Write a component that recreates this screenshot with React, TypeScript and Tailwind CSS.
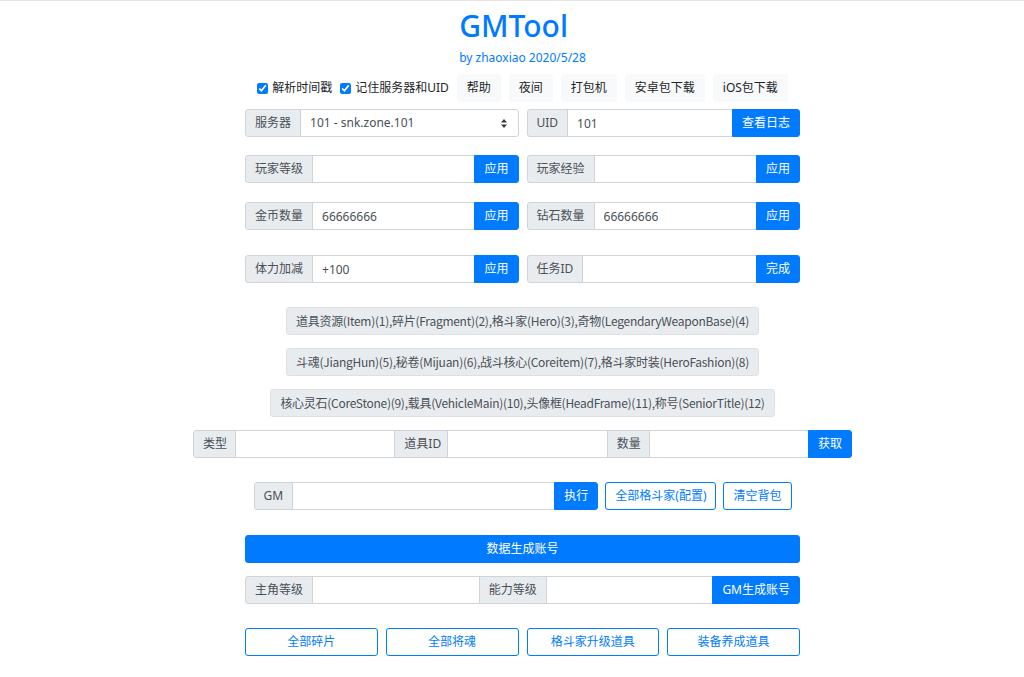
import React from 'react';

const addon = "flex items-center px-[9px] bg-[#e9ecef] border border-[#ced4da] text-[#495057] whitespace-nowrap";
const field = "min-w-0 h-[28px] px-[9px] bg-white border border-[#ced4da] text-[#495057] outline-none";
const primary = "flex items-center justify-center px-[9px] bg-[#007bff] border border-[#007bff] text-white whitespace-nowrap";
const outline = "flex items-center justify-center px-[9px] h-[28px] bg-white border border-[#007bff] text-[#007bff] rounded-[3px] whitespace-nowrap";

const InputRow = ({ label, value, action }: { label: string; value?: string; action: string }) => (
  <div className="flex h-[28px]">
    <span className={`${addon} rounded-l-[3px]`}>{label}</span>
    <input className={`${field} flex-1 -ml-px`} defaultValue={value} />
    <button className={`${primary} -ml-px rounded-r-[3px]`}>{action}</button>
  </div>
);

const itemTypes = [
  '道具资源(Item)(1),碎片(Fragment)(2),格斗家(Hero)(3),奇物(LegendaryWeaponBase)(4)',
  '斗魂(JiangHun)(5),秘卷(Mijuan)(6),战斗核心(Coreitem)(7),格斗家时装(HeroFashion)(8)',
  '核心灵石(CoreStone)(9),载具(VehicleMain)(10),头像框(HeadFrame)(11),称号(SeniorTitle)(12)',
];

const topButtons = ['帮助', '夜间', '打包机', '安卓包下载', 'iOS包下载'];
const bottomButtons = ['全部碎片', '全部将魂', '格斗家升级道具', '装备养成道具'];

export default function App() {
  return (
    <div className="min-h-[677px] bg-white border-t border-[#e5e5e5] pl-[21px] text-[12px] leading-[18px] text-[#212529] font-['Noto_Sans','Noto_Sans_CJK_SC',sans-serif]">
      <div className="w-[555px] mx-auto pb-[20px]">
        {/* Header */}
        <div className="flex justify-center">
          <div className="text-left">
            <h1 className="mt-[7px] text-[30px] leading-[36px] font-medium text-[#007bff]">GMTool</h1>
            <p className="mt-[5px] text-[#007bff]">by zhaoxiao 2020/5/28</p>
          </div>
        </div>

        {/* Options */}
        <div className="mt-[7px] flex justify-center items-center gap-[8px] h-[28px]">
          <label className="flex items-center gap-[4px]">
            <input type="checkbox" defaultChecked className="w-[11px] h-[11px] accent-[#007bff]" />
            <span>解析时间戳</span>
          </label>
          <label className="flex items-center gap-[4px]">
            <input type="checkbox" defaultChecked className="w-[11px] h-[11px] accent-[#007bff]" />
            <span>记住服务器和UID</span>
          </label>
          {topButtons.map((b) => (
            <button key={b} className="h-[28px] px-[9px] bg-[#f8f9fa] border border-[#f8f9fa] rounded-[3px] text-[#212529] whitespace-nowrap">
              {b}
            </button>
          ))}
        </div>

        {/* Server / UID */}
        <div className="mt-[7px] grid grid-cols-2 gap-[8px]">
          <div className="flex h-[28px]">
            <span className={`${addon} rounded-l-[3px]`}>服务器</span>
            <div className="flex-1 -ml-px flex items-center justify-between px-[9px] bg-white border border-[#ced4da] rounded-r-[3px] text-[#495057]">
              <span>101 - snk.zone.101</span>
              <svg width="8" height="11" viewBox="0 0 8 11" className="mr-[1px]">
                <path d="M4 1 L7 4.5 H1 Z" fill="#343a40" />
                <path d="M4 10 L7 6.5 H1 Z" fill="#343a40" />
              </svg>
            </div>
          </div>
          <div className="flex h-[28px]">
            <span className={`${addon} rounded-l-[3px]`}>UID</span>
            <input className={`${field} flex-1 -ml-px`} defaultValue="101" />
            <button className={`${primary} -ml-px rounded-r-[3px]`}>查看日志</button>
          </div>
        </div>

        <div className="mt-[18px] grid grid-cols-2 gap-[8px]">
          <InputRow label="玩家等级" action="应用" />
          <InputRow label="玩家经验" action="应用" />
        </div>
        <div className="mt-[19px] grid grid-cols-2 gap-[8px]">
          <InputRow label="金币数量" value="66666666" action="应用" />
          <InputRow label="钻石数量" value="66666666" action="应用" />
        </div>
        <div className="mt-[25px] grid grid-cols-2 gap-[8px]">
          <InputRow label="体力加减" value="+100" action="应用" />
          <InputRow label="任务ID" action="完成" />
        </div>

        {/* Item type hints */}
        <div className="mt-[24px] flex flex-col items-center gap-[13px] font-['Noto_Sans_CJK_SC',sans-serif] tracking-[-0.27px]">
          {itemTypes.map((t) => (
            <div key={t} className="h-[28px] flex items-center px-[9px] bg-[#e9ecef] border border-[#dde1e5] rounded-[3px] text-[#495057] whitespace-nowrap">
              {t}
            </div>
          ))}
        </div>

        {/* Get item */}
        <div className="mt-[13px] flex justify-center">
          <div className="flex h-[28px] w-[659px] shrink-0">
            <span className={`${addon} w-[43px] rounded-l-[3px]`}>类型</span>
            <input className={`${field} flex-1 -ml-px`} />
            <span className={`${addon} w-[54px] -ml-px`}>道具ID</span>
            <input className={`${field} flex-1 -ml-px`} />
            <span className={`${addon} w-[43px] -ml-px`}>数量</span>
            <input className={`${field} flex-1 -ml-px`} />
            <button className={`${primary} w-[44px] -ml-px rounded-r-[3px]`}>获取</button>
          </div>
        </div>

        {/* GM command */}
        <div className="mt-[24px] flex justify-center">
          <div className="flex w-[538px] gap-[7px]">
            <div className="flex h-[28px] flex-1">
              <span className={`${addon} rounded-l-[3px]`}>GM</span>
              <input className={`${field} flex-1 -ml-px`} />
              <button className={`${primary} -ml-px rounded-r-[3px]`}>执行</button>
            </div>
            <button className={outline}>全部格斗家(配置)</button>
            <button className={outline}>清空背包</button>
          </div>
        </div>

        <button className="mt-[25px] w-full h-[28px] bg-[#007bff] border border-[#007bff] rounded-[3px] text-white">
          数据生成账号
        </button>

        <div className="mt-[13px] flex h-[28px]">
          <span className={`${addon} rounded-l-[3px]`}>主角等级</span>
          <input className={`${field} flex-1 -ml-px`} />
          <span className={`${addon} -ml-px`}>能力等级</span>
          <input className={`${field} flex-1 -ml-px`} />
          <button className={`${primary} -ml-px rounded-r-[3px]`}>GM生成账号</button>
        </div>

        <div className="mt-[24px] grid grid-cols-4 gap-[8px]">
          {bottomButtons.map((b) => (
            <button key={b} className={outline}>{b}</button>
          ))}
        </div>
      </div>
    </div>
  );
}
